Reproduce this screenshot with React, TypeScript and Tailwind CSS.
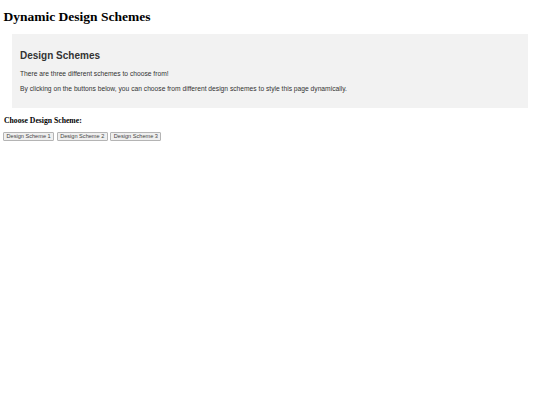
import React from 'react';

const schemes = ['Design Scheme 1', 'Design Scheme 2', 'Design Scheme 3'];

const App: React.FC = () => {
    return (
        <div className="min-h-screen bg-white px-[3px] pt-[8.5px] text-black">
            <h1 className="ml-[0.5px] font-['Liberation_Serif',serif] text-[13.5px] leading-[15.5px] font-bold">
                Dynamic Design Schemes
            </h1>

            <div className="mt-[10px] mx-[9px] h-[74px] bg-[#f2f2f2] px-[8px] pt-[15.5px] text-[#333] font-['Liberation_Sans',Arial,sans-serif]">
                <h2 className="text-[10px] leading-[11.5px] font-bold">Design Schemes</h2>
                <p className="mt-[8.6px] text-[6.7px] leading-[7.7px]">There are three different schemes to choose from!</p>
                <p className="mt-[7.3px] text-[6.7px] leading-[7.7px]">
                    By clicking on the buttons below, you can choose from different design schemes to style this page dynamically.
                </p>
            </div>

            <h3 className="mt-[8.7px] ml-[1px] font-['Liberation_Serif',serif] text-[7.7px] leading-[8.9px] font-bold">
                Choose Design Scheme:
            </h3>

            <div className="mt-[6.4px] flex gap-[2.5px]">
                {schemes.map(s => (
                    <button
                        key={s}
                        className="h-[9px] px-[2.5px] border border-[#b4b4b4] rounded-[1px] bg-[#efefef] text-[5.6px] leading-[7px] text-[#444] font-['Liberation_Sans',Arial,sans-serif]"
                    >
                        {s}
                    </button>
                ))}
            </div>
        </div>
    );
};

export default App;
